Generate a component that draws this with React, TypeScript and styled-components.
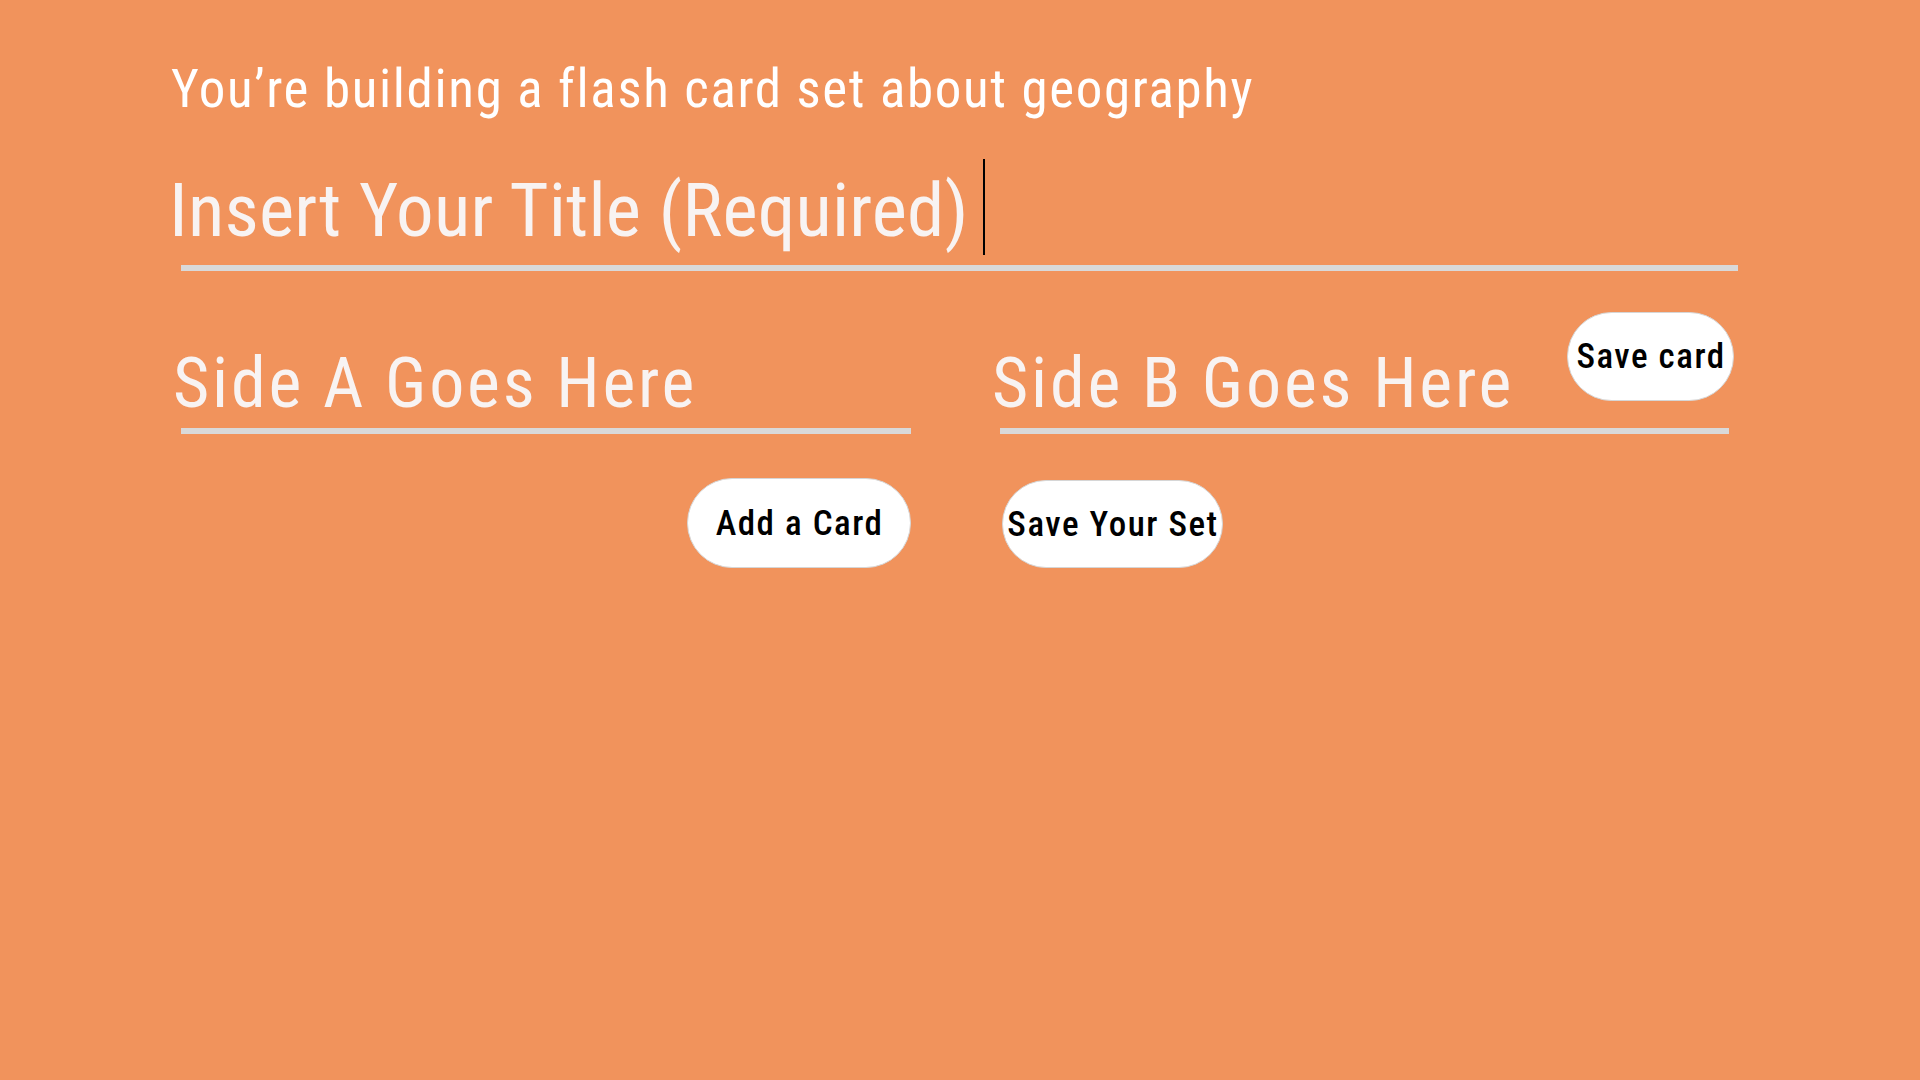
import React from "react";
import styled, { createGlobalStyle } from "styled-components";

const GlobalStyle = createGlobalStyle`
  html, body {
    margin: 0;
    padding: 0;
    background: #f1935c;
  }
  body {
    font-family: Roboto, "Noto Sans", "DejaVu Sans", sans-serif;
    font-stretch: 75%;
    min-height: 1080px;
  }
  * { box-sizing: border-box; }
`;

const Page = styled.main`
  min-height: 1080px;
  background: #f1935c;
  padding: 63px 0 0 175px;
`;

const Content = styled.div`
  width: 1563px;
  display: flex;
  flex-direction: column;
`;

const Heading = styled.h1`
  margin: 0 0 0 -4px;
  font-size: 53px;
  font-stretch: 75%;
  letter-spacing: 1.65px;
  line-height: 1;
  font-weight: 400;
  color: #ffffff;
`;

const Underlined = styled.div<{ $inset?: number; $end?: number }>`
  display: block;
  &::after {
    content: "";
    display: block;
    height: 6px;
    background: #d9d9d9;
    margin-left: ${(p) => p.$inset ?? 6}px;
    margin-right: ${(p) => p.$end ?? 0}px;
    margin-top: 10px;
  }
`;

const TitleRow = styled.div`
  margin-top: 43px;
  display: flex;
  align-items: flex-start;
  height: 96px;
`;

const TitlePlaceholder = styled.span`
  margin: 14px 0 0 -6px;
  font-size: 75px;
  font-stretch: 75%;
  letter-spacing: 0.2px;
  line-height: 1;
  color: #f8f3f2;
`;

const Caret = styled.span`
  width: 2px;
  height: 96px;
  margin-left: 14px;
  background: #000;
`;

const Columns = styled.div<{ $gapTop: number }>`
  display: grid;
  grid-template-columns: 736px minmax(0, 1fr);
  column-gap: 83px;
  align-items: end;
  margin-top: ${(p) => p.$gapTop}px;
`;

const SideRow = styled.div`
  display: flex;
  align-items: flex-start;
`;

const SideInput = styled.input<{ $top?: number }>`
  display: block;
  width: 100%;
  flex: 1 1 0;
  min-width: 0;
  margin: ${(p) => p.$top ?? 0}px 0 0 -2px;
  height: 70px;
  padding: 0;
  border: none;
  outline: none;
  background: transparent;
  font-family: inherit;
  font-stretch: 75%;
  letter-spacing: 2.8px;
  font-size: 70px;
  line-height: 1;
  color: #f8f3f2;
  &::placeholder {
    color: #f8f3f2;
    opacity: 1;
  }
`;

const PillButton = styled.button<{ $w: number; $h: number; $shift?: number; $self?: string }>`
  width: ${(p) => p.$w}px;
  height: ${(p) => p.$h}px;
  flex: none;
  justify-self: ${(p) => p.$self ?? "start"};
  margin-left: ${(p) => p.$shift ?? 0}px;
  margin-top: ${(p) => (p.$self === "start" ? 2 : 0)}px;
  border: 1px solid #d6d6d6;
  border-radius: 999px;
  background: #ffffff;
  color: #000;
  font-family: inherit;
  font-stretch: 75%;
  letter-spacing: 1.5px;
  font-size: 35px;
  font-weight: 500;
  line-height: 1;
  padding: 0 0 0 1px;
  display: flex;
  align-items: center;
  justify-content: center;
  cursor: pointer;
`;

const SaveCard = styled(PillButton)`
  margin-right: 4px;
`;

export default function App() {
  return (
    <>
      <GlobalStyle />
      <Page>
        <Content>
          <Heading>You’re building a flash card set about geography</Heading>
          <Underlined>
            <TitleRow>
              <TitlePlaceholder>Insert Your Title (Required)</TitlePlaceholder>
              <Caret />
            </TitleRow>
          </Underlined>
          <Columns $gapTop={41}>
            <Underlined>
              <SideInput placeholder="Side A Goes Here" aria-label="Side A" />
            </Underlined>
            <Underlined $end={9}>
              <SideRow>
                <SideInput $top={36} placeholder="Side B Goes Here" aria-label="Side B" />
                <SaveCard $w={167} $h={89}>Save card</SaveCard>
              </SideRow>
            </Underlined>
          </Columns>
          <Columns $gapTop={44}>
            <PillButton $w={224} $h={90} $self="end">Add a Card</PillButton>
            <PillButton $w={221} $h={88} $self="start" $shift={8}>Save Your Set</PillButton>
          </Columns>
        </Content>
      </Page>
    </>
  );
}
